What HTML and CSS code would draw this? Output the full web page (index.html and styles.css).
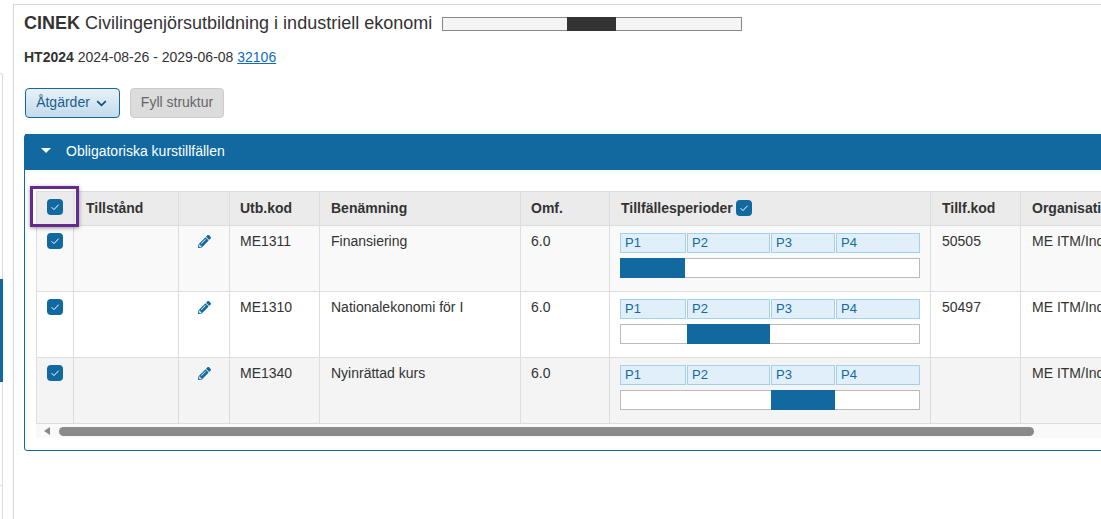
FILE: index.html
```html
<!DOCTYPE html>
<html lang="sv">
  <head>
    <title>CINEK</title>
    <link rel="stylesheet" href="styles.css">
  </head>
  <body>
    <svg class="defs" width="0" height="0">
      <symbol id="check" viewBox="0 0 16 16"><path d="M4.6 8.2l2.4 2.4 4.6-4.9" fill="none" stroke="#fff" stroke-width="1"/></symbol>
      <symbol id="pencil" viewBox="0 0 512 512"><path d="M497.9 142.1l-46.1 46.1c-4.7 4.7-12.3 4.7-17 0l-111-111c-4.7-4.7-4.7-12.3 0-17l46.1-46.1c18.7-18.7 49.1-18.7 67.9 0l60.1 60.1c18.8 18.7 18.8 49.1 0 67.9zM284.2 99.8L21.6 362.4.4 483.9c-2.9 16.4 11.4 30.6 27.8 27.8l121.5-21.3 262.6-262.6c4.7-4.7 4.7-12.3 0-17l-111-111c-4.8-4.7-12.4-4.7-17.1 0zM124.1 339.9c-5.5-5.5-5.5-14.3 0-19.8l154-154c5.5-5.5 14.3-5.5 19.8 0s5.5 14.3 0 19.8l-154 154c-5.5 5.5-14.3 5.5-19.8 0zM88 424h48v36.3l-64.5 11.3-31.1-31.1L51.7 376H88v48z" fill="#11699f"/></symbol>
    </svg>
    <div class="layout">
      <div class="side">
        <div class="sideActive"></div>
        <div class="sideSplit"></div>
      </div>
      <div class="main">
        <div class="titleRow">
          <h1><b>CINEK</b> Civilingenjörsutbildning i industriell ekonomi</h1>
          <div class="titleBar"><div class="titleFill"></div></div>
        </div>
        <div class="term"><b>HT2024</b> 2024-08-26 - 2029-06-08 <a href="#">32106</a></div>
        <div class="buttons">
          <button class="btn btnAction">Åtgärder<svg width="11" height="7" viewBox="0 0 11 7"><path d="M1.2 1.2l4.3 4.1 4.3-4.1" fill="none" stroke="#11527d" stroke-width="1.8"/></svg></button>
          <button class="btn btnOff">Fyll struktur</button>
        </div>
        <div class="panel">
          <div class="panelHead"><span class="caret"></span>Obligatoriska kurstillfällen</div>
          <div class="panelBody">
            <table>
              <colgroup>
                <col class="c1"><col class="c2"><col class="c3"><col class="c4"><col class="c5"><col class="c6"><col class="c7"><col class="c8"><col class="c9">
              </colgroup>
              <thead>
                <tr>
                  <th class="checkCell">
                    <svg class="box"><use href="#check"/></svg>
                    <span class="focusBox"></span>
                  </th>
                  <th>Tillstånd</th>
                  <th></th>
                  <th>Utb.kod</th>
                  <th>Benämning</th>
                  <th>Omf.</th>
                  <th>Tillfällesperioder <svg class="box boxInline"><use href="#check"/></svg></th>
                  <th>Tillf.kod</th>
                  <th>Organisation</th>
                </tr>
              </thead>
              <tbody>
                <tr class="rowA">
                  <td class="checkCell"><svg class="box"><use href="#check"/></svg></td>
                  <td></td>
                  <td class="editCell"><svg class="edit"><use href="#pencil"/></svg></td>
                  <td>ME1311</td>
                  <td>Finansiering</td>
                  <td>6.0</td>
                  <td class="periodCell">
                    <div class="periods"><span>P1</span><span>P2</span><span>P3</span><span>P4</span></div>
                    <div class="bar"><div class="fill p1"></div></div>
                  </td>
                  <td>50505</td>
                  <td>ME ITM/Industriell ekonomi</td>
                </tr>
                <tr class="rowB">
                  <td class="checkCell"><svg class="box"><use href="#check"/></svg></td>
                  <td></td>
                  <td class="editCell"><svg class="edit"><use href="#pencil"/></svg></td>
                  <td>ME1310</td>
                  <td>Nationalekonomi för I</td>
                  <td>6.0</td>
                  <td class="periodCell">
                    <div class="periods"><span>P1</span><span>P2</span><span>P3</span><span>P4</span></div>
                    <div class="bar"><div class="fill p2"></div></div>
                  </td>
                  <td>50497</td>
                  <td>ME ITM/Industriell ekonomi</td>
                </tr>
                <tr class="rowC">
                  <td class="checkCell"><svg class="box"><use href="#check"/></svg></td>
                  <td></td>
                  <td class="editCell"><svg class="edit"><use href="#pencil"/></svg></td>
                  <td>ME1340</td>
                  <td>Nyinrättad kurs</td>
                  <td>6.0</td>
                  <td class="periodCell">
                    <div class="periods"><span>P1</span><span>P2</span><span>P3</span><span>P4</span></div>
                    <div class="bar"><div class="fill p3"></div></div>
                  </td>
                  <td></td>
                  <td>ME ITM/Industriell ekonomi</td>
                </tr>
              </tbody>
            </table>
            <div class="scroll">
              <span class="scrollArrow"></span>
              <div class="scrollThumb"></div>
            </div>
          </div>
        </div>
      </div>
    </div>
  </body>
</html>
```

FILE: styles.css
```css
html, body{
    margin:0;
    height:100%;
    overflow:hidden;
    background:#fff;
}
body{
    font-family:"Liberation Sans", Arial, sans-serif;
    font-size:14px;
    color:#333;
}
.defs{
    position:absolute;
}
.layout{
    display:flex;
    height:519px;
}

/* sidebar sliver on the left */
.side{
    width:3px;
    flex:none;
    margin-top:73px;
    border-right:1px solid #ddd;
    border-top:1px solid #ddd;
    border-top-right-radius:3px;
    box-sizing:border-box;
    display:flex;
    flex-direction:column;
}
.sideActive{
    height:103px;
    margin-top:205px;
    margin-right:-1px;
    background:#11699f;
}
.sideSplit{
    margin-top:103px;
    border-top:1px solid #ddd;
}

.main{
    flex:none;
    width:1200px;
    margin:4px 0 0 10px;
    padding:0 0 0 10px;
    border-top:1px solid #d8d8d8;
    border-left:1px solid #d8d8d8;
}

.titleRow{
    display:flex;
    align-items:center;
    gap:10px;
    height:37px;
}
h1{
    margin:0;
    font-size:18px;
    font-weight:normal;
    color:#333;
}
.titleBar{
    width:300px;
    height:14px;
    box-sizing:border-box;
    border:1px solid #888;
    background:#f4f4f4;
    padding-left:124px;
}
.titleFill{
    width:49px;
    height:14px;
    margin-top:-1px;
    background:#333;
}
.term{
    margin-top:7px;
    line-height:16px;
}
.term a{
    color:#0f6cbf;
}

.buttons{
    display:flex;
    gap:10px;
    margin:23px 0 16px 1px;
}
.btn{
    height:30px;
    padding:0 0 2px;
    border-radius:4px;
    font-family:inherit;
    font-size:14px;
    box-sizing:border-box;
}
.btnAction{
    width:95px;
    padding-right:2px;
    border:1px solid #11699f;
    background:linear-gradient(#e8f1f8, #c3dbec);
    color:#1a5f8c;
}
.btnAction svg{
    margin-left:6px;
}
.btnOff{
    width:94px;
    border:1px solid #ccc;
    background:#dcdcdc;
    color:#666;
}

.panel{
    width:1200px;
    border:1px solid #11699f;
    border-radius:3px;
    box-sizing:border-box;
}
.panelHead{
    height:33px;
    margin-top:-1px;
    padding:0 0 3px;
    display:flex;
    align-items:center;
    background:#11699f;
    color:#fff;
    font-size:14px;
}
.caret{
    width:0;
    height:0;
    margin:0 15px 0 16px;
    border-left:5.5px solid transparent;
    border-right:5.5px solid transparent;
    border-top:5px solid #fff;
}
.panelBody{
    padding:21px 0 12px 11px;
}

table{
    table-layout:fixed;
    width:1300px;
    border-collapse:collapse;
}
.c1{width:37px;}
.c2{width:105px;}
.c3{width:51px;}
.c4{width:90px;}
.c5{width:201px;}
.c6{width:89px;}
.c7{width:321px;}
.c8{width:90px;}
.c9{width:316px;}

th, td{
    border:1px solid #ddd;
    padding:7px 10px 0 11px;
    text-align:left;
    vertical-align:top;
    line-height:16px;
    white-space:nowrap;
    overflow:hidden;
}
th{
    height:34px;
    box-sizing:border-box;
    background:#ebebeb;
    font-weight:bold;
    vertical-align:middle;
    padding-top:0;
    padding-bottom:2px;
}
td{
    height:66px;
    box-sizing:border-box;
}
.rowA td{background:#f9f9f9;}
.rowB td{background:#fff;}
.rowC td{background:#f4f4f4;}

th:nth-child(2){padding-left:12px;}
th:nth-child(4), td:nth-child(4), th:nth-child(6), td:nth-child(6){padding-left:10px;}

th.checkCell, td.checkCell{
    padding:7px 0 0 10px;
    overflow:visible;
}
th.checkCell{
    position:relative;
    padding-top:0;
    padding-bottom:3px;
}
.box{
    display:block;
    width:16px;
    height:16px;
    border-radius:4px;
    background:#11699f;
}
.boxInline{
    display:inline-block;
    vertical-align:-3px;
    margin-left:-1px;
}
.focusBox{
    position:absolute;
    left:-7px;
    top:-6px;
    width:49px;
    height:41px;
    box-sizing:border-box;
    border:3px solid #642a8c;
    box-shadow:0 1px 4px rgba(0,0,0,.4);
}
td.editCell{
    padding:9px 0 0 19px;
}
.edit{
    display:block;
    width:13px;
    height:13px;
}

td.periodCell{
    padding:7px 0 0 10px;
}
.periods, .bar{
    display:grid;
    grid-template-columns:66px 83px 64px 84px;
    column-gap:1px;
    width:300px;
}
.periods span{
    height:20px;
    box-sizing:border-box;
    padding-left:4px;
    border:1px solid #a3d0ec;
    background:#e0eff9;
    color:#11699f;
    font-size:13px;
    line-height:18px;
}
.bar{
    margin-top:5px;
    height:20px;
    box-shadow:inset 0 0 0 1px #bbb;
    background:#fff;
}
.fill{
    height:20px;
    background:#11699f;
}
.p1{grid-column:1; margin-right:1px;}
.p2{grid-column:2;}
.p3{grid-column:3;}

.scroll{
    display:flex;
    align-items:center;
    height:14px;
    background:#f9f9f9;
}
.scrollArrow{
    width:0;
    height:0;
    margin-left:8px;
    border-top:4.5px solid transparent;
    border-bottom:4.5px solid transparent;
    border-right:6px solid #888;
}
.scrollThumb{
    width:975px;
    height:9px;
    margin-left:9px;
    border-radius:5px;
    background:#8a8a8a;
}
```
